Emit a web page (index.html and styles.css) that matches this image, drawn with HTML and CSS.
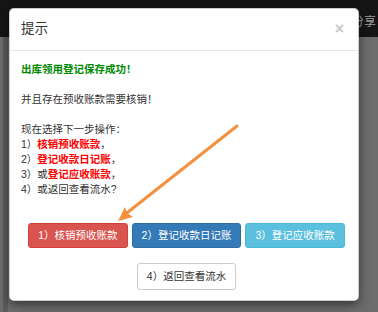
FILE: index.html
```html
<!DOCTYPE html>
<html>
<head>
  <link rel="stylesheet" href="styles.css">
</head>
<body>
  <div class="page">
    <div class="topbar"><span class="share">分享</span></div>
    <div class="content"></div>
  </div>

  <div class="modal">
    <div class="modal-header">
      <h4 class="modal-title">提示</h4>
      <button class="close">×</button>
    </div>
    <div class="modal-body">
      <div class="msg">
        <b class="ok">出库领用登记保存成功！</b><br>
        <br>
        并且存在预收账款需要核销！<br>
        <br>
        现在选择下一步操作：<br>
        1）<b class="hl">核销预收账款</b>，<br>
        2）<b class="hl">登记收款日记账</b>，<br>
        3）或<b class="hl">登记应收账款</b>，<br>
        4）或返回查看流水?
      </div>
      <div class="actions">
        <button class="btn btn-danger">1）核销预收账款</button>
        <button class="btn btn-primary">2）登记收款日记账</button>
        <button class="btn btn-info">3）登记应收账款</button>
      </div>
      <div class="actions back">
        <button class="btn btn-default">4）返回查看流水</button>
      </div>
    </div>
  </div>

  <!-- annotation arrow drawn over the dialog -->
  <svg class="arrow" width="378" height="312" viewBox="0 0 378 312">
    <line x1="237" y1="126" x2="123" y2="216" stroke="#f5913e" stroke-width="3" stroke-linecap="round" />
    <polygon points="118,221 125,207 127,213 133,217" fill="#f5913e" />
  </svg>
</body>
</html>
```

FILE: styles.css
```css
body {
  margin: 0;
  font-family: "Liberation Sans", "Noto Sans CJK SC", sans-serif;
  background: #6d6d6d;
  overflow: hidden;
}

.page {
  height: 312px;
  display: flex;
  flex-direction: column;
}

.topbar {
  height: 37px;
  background: #151515;
  display: flex;
  justify-content: flex-end;
  align-items: flex-start;
  padding-right: 2px;
}

.share {
  margin-top: 12px;
  font-size: 12px;
  color: #9a9a9a;
}

.content {
  flex: 1;
  margin: 0 20px 0 3px;
  border-left: 5px solid #5c5c5c;
  background: #6e6e6e;
}

.modal {
  position: absolute;
  left: 9px;
  top: 8px;
  width: 350px;
  box-sizing: border-box;
  background: #fff;
  border: 1px solid rgba(0,0,0,0.2);
  border-radius: 5px;
  box-shadow: 0 4px 11px rgba(0,0,0,0.5);
  color: #333;
}

.modal-header {
  display: flex;
  justify-content: space-between;
  align-items: center;
  padding: 10px 11px 11px;
  border-bottom: 1px solid #e5e5e5;
}

.modal-title {
  margin: 0;
  font-size: 13.5px;
  font-weight: normal;
  line-height: 20px;
}

.close {
  border: 0;
  background: none;
  padding: 0;
  font-family: "Liberation Sans", sans-serif;
  font-size: 16px;
  font-weight: bold;
  line-height: 1;
  color: #c8c8c8;
  margin-right: 3px;
}

.modal-body {
  padding: 11px 11px 10px;
}

.msg {
  font-size: 10.5px;
  line-height: 15px;
}

.ok {
  color: #008a00;
}

.hl {
  color: #ff0000;
}

.actions {
  display: flex;
  justify-content: center;
  gap: 4px;
  margin-top: 26px;
  padding-left: 5px;
}

.actions.back {
  margin-top: 15px;
}

.btn {
  font-family: "Liberation Sans", "Noto Sans CJK SC", sans-serif;
  font-size: 10.5px;
  line-height: 15px;
  padding: 4px 9px;
  border: 1px solid transparent;
  border-radius: 3px;
  color: #fff;
}

.btn-danger {
  background: #d9534f;
  border-color: #d43f3a;
}

.btn-primary {
  background: #337ab7;
  border-color: #2e6da4;
}

.btn-info {
  background: #5bc0de;
  border-color: #46b8da;
}

.btn-default {
  background: #fff;
  border-color: #ccc;
  color: #333;
  padding: 5px 9px;
}

.arrow {
  position: absolute;
  left: 0;
  top: 0;
  pointer-events: none;
}
```
